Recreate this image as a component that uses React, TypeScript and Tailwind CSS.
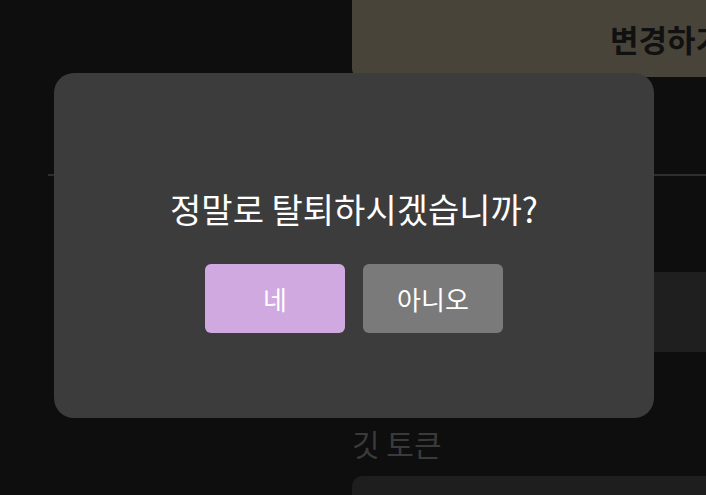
export default function App() {
  return (
    <div
      className="relative w-[706px] h-[495px] overflow-hidden bg-[#0e0e0e]"
      style={{ fontFamily: '"Noto Sans CJK KR", "Noto Sans", sans-serif' }}
    >
      {/* page behind the dimmed overlay */}
      <div className="flex flex-col">
        <div className="ml-[352px] flex h-[77px] w-[640px] shrink-0 items-center rounded-bl-lg bg-[#48443a] pl-[258px]">
          <span className="text-[31px] font-bold leading-none text-[#111111]">변경하기</span>
        </div>
        <div className="ml-[48px] mt-[97px] h-[2px] w-[700px] bg-[#2e2e2e]" />
        <div className="ml-[352px] mt-[96px] h-[80px] w-[400px] bg-[#1f1f1f]" />
        <div className="ml-[352px] mt-[76px] text-[30px] leading-none text-[#3a3a3a]">깃 토큰</div>
        <div className="ml-[352px] mt-[18px] h-[60px] w-[400px] rounded-[10px] bg-[#1e1e1e]" />
      </div>

      {/* dialog */}
      <div className="absolute left-[54px] top-[73px] flex h-[345px] w-[600px] flex-col items-center rounded-[20px] bg-[#3c3c3c] pt-[112px]">
        <h2 className="text-[34px] leading-[48px] text-white">정말로 탈퇴하시겠습니까?</h2>
        <div className="mt-[31px] flex gap-[18px]">
          <button className="flex h-[69px] w-[140px] items-center justify-center rounded-md bg-[#cfa9df] text-[26px] text-white">
            네
          </button>
          <button className="flex h-[69px] w-[140px] items-center justify-center rounded-md bg-[#7a7a7a] text-[26px] text-white">
            아니오
          </button>
        </div>
      </div>
    </div>
  );
}
